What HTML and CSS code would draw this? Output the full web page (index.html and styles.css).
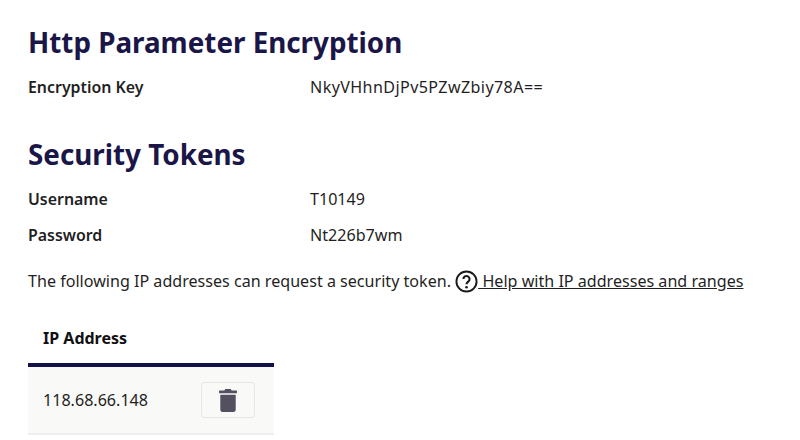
FILE: index.html
```html
<!DOCTYPE html>
<html lang="en">
<head>
    <meta charset="UTF-8">
    <title>Security Settings</title>
    <link rel="stylesheet" href="styles.css">
</head>
<body>
    <div class="container">
        <h1 class="first">Http Parameter Encryption</h1>
        <div class="row"><div class="label">Encryption Key</div><div class="key">NkyVHhnDjPv5PZwZbiy78A==</div></div>

        <h1 class="second">Security Tokens</h1>
        <div class="row"><div class="label">Username</div><div>T10149</div></div>
        <div class="row"><div class="label">Password</div><div>Nt226b7wm</div></div>

        <p class="note">The following IP addresses can request a security token.
            <a href="#"><svg class="help" viewBox="0 0 24 24" width="23" height="23"><circle cx="12" cy="12" r="10.5" fill="none" stroke="#1a1a1a" stroke-width="2"/><path d="M8.800 9.500a3.200 3.200 0 1 1 5 2.600c-1.100.8-1.800 1.300-1.800 2.700" fill="none" stroke="#1a1a1a" stroke-width="2.200"/><circle cx="12" cy="18" r="1.400" fill="#1a1a1a"/></svg> Help with IP addresses and ranges</a></p>

        <table>
            <thead><tr><th>IP Address</th></tr></thead>
            <tbody>
                <tr><td><div class="cell"><span>118.68.66.148</span>
                    <button class="del"><svg viewBox="0 0 448 512" width="18" height="23" preserveAspectRatio="none"><path fill="#55505f" d="M32 464a48 48 0 0 0 48 48h288a48 48 0 0 0 48-48V128H32zM432 32H312l-9.400-18.700A24 24 0 0 0 281.100 0H166.800a23.700 23.700 0 0 0-21.400 13.300L136 32H16A16 16 0 0 0 0 48v32a16 16 0 0 0 16 16h416a16 16 0 0 0 16-16V48a16 16 0 0 0-16-16z"/></svg></button></div></td></tr>
            </tbody>
        </table>
    </div>
</body>
</html>
```

FILE: styles.css
```css
body {
    margin: 0;
    font-family: "Noto Sans", sans-serif;
    font-size: 16.1px;
    color: #1f1f24;
    background: white;
    height: 440px;
    overflow: hidden;
}
.container {
    padding: 0 28px;
}
h1 {
    font-size: 27.800px;
    line-height: 36px;
    font-weight: 700;
    color: #1b1648;
    margin: 0 0 9px;
}
h1.first {
    padding-top: 24px;
}
h1.second {
    margin-top: 31px;
}
.row {
    display: flex;
    height: 36px;
    align-items: center;
}
.label {
    width: 282px;
    font-weight: 600;
    font-size: 15.900px;
}
.key {
    letter-spacing: 0.4px;
}
.note {
    margin: 14px 0 17px;
    line-height: 28px;
}
.note a {
    color: #1f1f24;
}
.help {
    vertical-align: -6px;
}
table {
    border-collapse: collapse;
    width: 246px;
}
th {
    text-align: left;
    padding: 0 15px;
    height: 51px;
    font-weight: 700;
    font-size: 16px;
    color: #111;
    border-bottom: 4px solid #14104a;
}
td {
    background: #f9f9f8;
    padding: 0 19px 0 15px;
    height: 66px;
    border-bottom: 2px solid #eee;
}
.cell {
    display: flex;
    justify-content: space-between;
    align-items: center;
}
.del {
    width: 54px;
    height: 36px;
    background: #f9f9f8;
    border: 1px solid #e6e6e6;
    border-radius: 3px;
    display: flex;
    align-items: center;
    justify-content: center;
    padding: 0;
}
```
